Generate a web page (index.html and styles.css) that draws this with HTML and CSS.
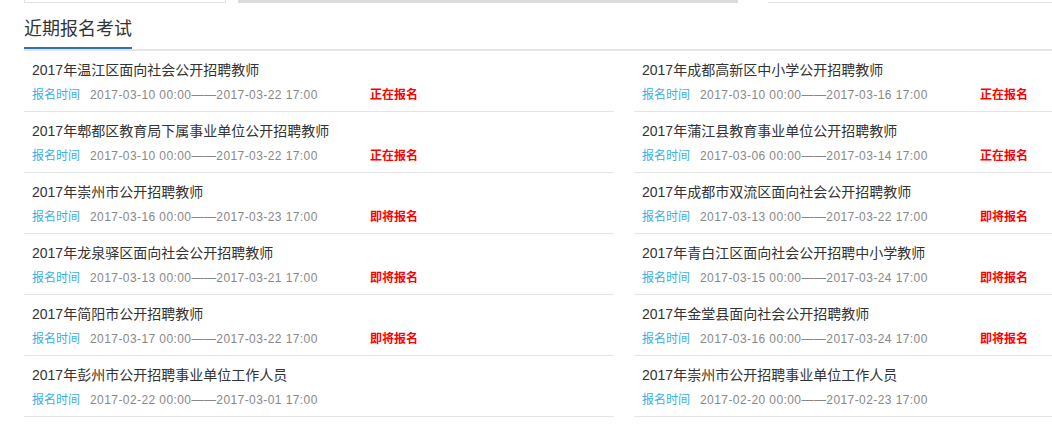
FILE: index.html
```html
<!DOCTYPE html>
<html lang="zh-CN">
<head>
    <meta charset="utf-8">
    <meta name="viewport" content="width=device-width, initial-scale=1">
    <title>近期报名考试</title>

    <link rel="stylesheet" href="styles.css">
</head>
<body>

<div class="page">
    <div class="top-strip">
        <div class="search-box"></div>
        <div class="search-bar"></div>
        <div class="top-line"></div>
    </div>

    <div class="section-title">
        <h2>近期报名考试</h2>
    </div>

    <div class="exam-list">
        <div class="exam">
            <div class="name">2017年温江区面向社会公开招聘教师</div>
            <div class="meta"><span class="label">报名时间</span><span class="date">2017-03-10 00:00——2017-03-22 17:00</span><span class="status">正在报名</span></div>
        </div>
        <div class="exam">
            <div class="name">2017年成都高新区中小学公开招聘教师</div>
            <div class="meta"><span class="label">报名时间</span><span class="date">2017-03-10 00:00——2017-03-16 17:00</span><span class="status">正在报名</span></div>
        </div>
        <div class="exam">
            <div class="name">2017年郫都区教育局下属事业单位公开招聘教师</div>
            <div class="meta"><span class="label">报名时间</span><span class="date">2017-03-10 00:00——2017-03-22 17:00</span><span class="status">正在报名</span></div>
        </div>
        <div class="exam">
            <div class="name">2017年蒲江县教育事业单位公开招聘教师</div>
            <div class="meta"><span class="label">报名时间</span><span class="date">2017-03-06 00:00——2017-03-14 17:00</span><span class="status">正在报名</span></div>
        </div>
        <div class="exam">
            <div class="name">2017年崇州市公开招聘教师</div>
            <div class="meta"><span class="label">报名时间</span><span class="date">2017-03-16 00:00——2017-03-23 17:00</span><span class="status">即将报名</span></div>
        </div>
        <div class="exam">
            <div class="name">2017年成都市双流区面向社会公开招聘教师</div>
            <div class="meta"><span class="label">报名时间</span><span class="date">2017-03-13 00:00——2017-03-22 17:00</span><span class="status">即将报名</span></div>
        </div>
        <div class="exam">
            <div class="name">2017年龙泉驿区面向社会公开招聘教师</div>
            <div class="meta"><span class="label">报名时间</span><span class="date">2017-03-13 00:00——2017-03-21 17:00</span><span class="status">即将报名</span></div>
        </div>
        <div class="exam">
            <div class="name">2017年青白江区面向社会公开招聘中小学教师</div>
            <div class="meta"><span class="label">报名时间</span><span class="date">2017-03-15 00:00——2017-03-24 17:00</span><span class="status">即将报名</span></div>
        </div>
        <div class="exam">
            <div class="name">2017年简阳市公开招聘教师</div>
            <div class="meta"><span class="label">报名时间</span><span class="date">2017-03-17 00:00——2017-03-22 17:00</span><span class="status">即将报名</span></div>
        </div>
        <div class="exam">
            <div class="name">2017年金堂县面向社会公开招聘教师</div>
            <div class="meta"><span class="label">报名时间</span><span class="date">2017-03-16 00:00——2017-03-24 17:00</span><span class="status">即将报名</span></div>
        </div>
        <div class="exam">
            <div class="name">2017年彭州市公开招聘事业单位工作人员</div>
            <div class="meta"><span class="label">报名时间</span><span class="date">2017-02-22 00:00——2017-03-01 17:00</span></div>
        </div>
        <div class="exam">
            <div class="name">2017年崇州市公开招聘事业单位工作人员</div>
            <div class="meta"><span class="label">报名时间</span><span class="date">2017-02-20 00:00——2017-02-23 17:00</span></div>
        </div>
    </div>
</div>

</body>
</html>
```

FILE: styles.css
```css
html, body {
    margin: 0;
    overflow: hidden;
    background: #fff;
}
body {
    font-family: "Liberation Sans", "Noto Sans CJK SC", sans-serif;
    color: #333;
}
.page {
    width: 1200px;
    padding-left: 24px;
}
.top-strip {
    display: flex;
    height: 3px;
    width: 1400px;
}
.search-box {
    width: 200px;
    height: 2px;
    border: 1px solid #e3e3e3;
    border-top: none;
}
.search-bar {
    width: 500px;
    height: 3px;
    margin-left: 12px;
    background-color: #dcdcdc;
}
.top-line {
    flex: 1;
    height: 1px;
    margin-top: 2px;
    margin-left: 30px;
    background-color: #e3e3e3;
}
.section-title {
    width: 1400px;
    height: 46px;
    border-bottom: 2px solid #e5e5e5;
}
.section-title h2 {
    display: inline-block;
    margin: 0;
    height: 46px;
    padding-top: 14px;
    box-sizing: border-box;
    border-bottom: 2px solid #2d72bc;
    font-size: 18px;
    font-weight: normal;
    line-height: 24px;
    color: #333;
}
.exam-list {
    display: grid;
    grid-template-columns: 590px 590px;
    column-gap: 20px;
}
.exam {
    padding: 7px 8px 2px;
    border-bottom: 1px solid #e5e5e5;
}
.exam .name {
    font-size: 14px;
    line-height: 24px;
    color: #333;
    white-space: nowrap;
}
.exam .meta {
    display: flex;
    font-size: 12px;
    line-height: 27px;
    white-space: nowrap;
}
.meta .label {
    width: 58px;
    color: #3aaee6;
}
.meta .date {
    width: 280px;
    color: #888;
    letter-spacing: 0.42px;
}
.meta .status {
    color: #f00;
    font-weight: bold;
}
```
